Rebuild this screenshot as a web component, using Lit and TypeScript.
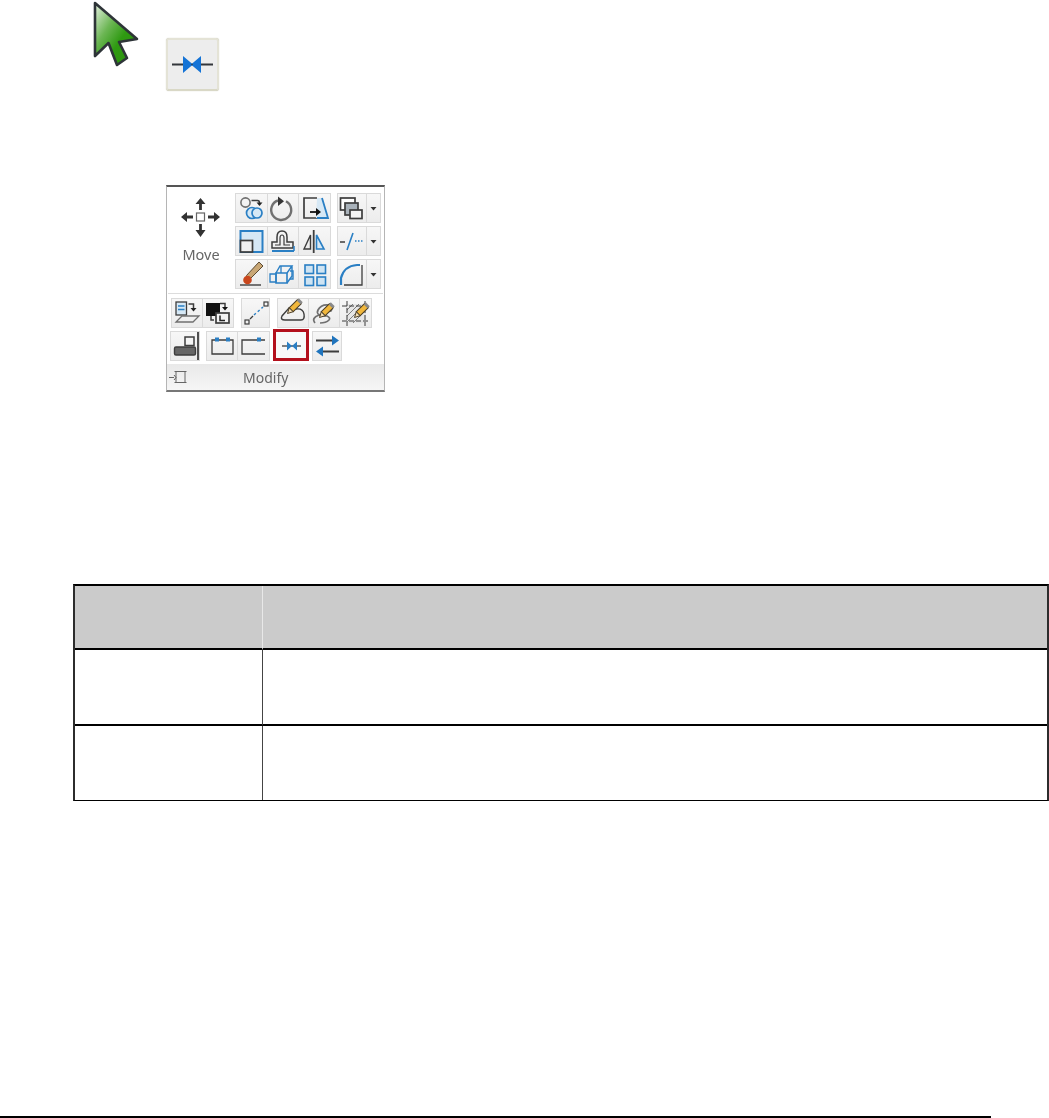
import { LitElement, html, css, svg } from "lit";
import { customElement } from "lit/decorators.js";

const B = "#2a7fc4";
const D = "#3d3d3d";
const G = "#707070";
const ic = (w: number, body: unknown) =>
  html`<svg width=${w} height="30" viewBox="0 0 ${w} 30" fill="none" stroke-width="1.4">${body}</svg>`;

const pencil = (x: number, y: number) => svg`<g transform="translate(${x} ${y}) rotate(45) scale(1.15)">
  <rect x="-2.4" y="-9" width="4.8" height="10" fill="#f1b73c" stroke="#4a3d25" stroke-width=".9"/>
  <rect x="-2.4" y="-10.8" width="4.8" height="2.6" fill="#8a8a8a"/>
  <path d="M-2.4 1 0 5.500 2.400 1z" fill="#f3dcb0" stroke="#4a3d25" stroke-width=".8"/></g>`;

const icons: Record<string, unknown> = {
  copy: svg`<circle cx="10.500" cy="9.500" r="4.600" stroke=${G} stroke-width="1.6"/><circle cx="17" cy="20" r="5.500" fill="#d6e8f5" stroke=${B} stroke-width="1.700"/><circle cx="22" cy="20" r="5" fill="#d6e8f5" stroke=${B} stroke-width="1.700"/><path d="M16.500 7.500h6q2 0 2 2.500" stroke=${D} stroke-width="1.500"/><path d="M21.500 9.500h6l-3 3.500z" fill="#222"/>`,
  rotate: svg`<path d="M11 7.500a10 10 0 1 0 8 .7" stroke=${G} stroke-width="2.400"/><path d="M11 3.500v9.500l6-4.800z" fill="#333"/>`,
  stretch: svg`<path d="M19 25H6V5h13" stroke=${D} stroke-width="1.700"/><path d="M19 5h5l6 20H18z" fill="#d6e8f5"/><path d="M24 5l6 20H19" stroke=${B} stroke-width="1.800"/><path d="M12 19h7" stroke="#111" stroke-width="1.800"/><path d="M18 15l5 4-5 4z" fill="#111"/>`,
  layers: svg`<rect x="3.500" y="5" width="14.500" height="12" fill="#fff" stroke=${D} stroke-width="1.700"/><rect x="8" y="10" width="13" height="12" fill="#a9b2ba" stroke=${D} stroke-width="1.700"/><rect x="13" y="17" width="12" height="8.500" fill="#f4f4f4" stroke=${D} stroke-width="1.700"/>`,
  scale: svg`<rect x="5.500" y="5" width="22" height="21" fill="#d6e8f5" stroke=${B} stroke-width="2"/><rect x="5.500" y="14.500" width="12" height="11.500" fill="#f0f0f0" stroke=${D} stroke-width="1.700"/>`,
  offset: svg`<path d="M5 22v-6h5V11q0-6 5-6t5 6v5h6v6z" stroke=${D} stroke-width="1.500"/><path d="M8 19h5v-7q0-3 2-3t2 3v7h6" stroke=${D} stroke-width="1.200"/><path d="M5 25h22" stroke=${B} stroke-width="2"/><path d="M27 25v-5" stroke=${B} stroke-width="1.500"/>`,
  mirror: svg`<path d="M15.700 4v23" stroke=${D} stroke-width="1.800"/><path d="M12.500 9v14H6z" stroke=${D} stroke-width="1.400" fill="#eee"/><path d="M18.500 9v14H26z" stroke=${B} stroke-width="1.600" fill="#d6e8f5"/>`,
  trim: svg`<path d="M3 16h5" stroke=${D} stroke-width="1.500"/><path d="M18 15h1.500M21 15h1.500M24 15h1.500" stroke=${B} stroke-width="1.500"/><path d="M10 24L16 7" stroke=${B} stroke-width="1.600"/>`,
  fillet: svg`<path d="M4 26V19Q7 7 20 6h3" stroke=${B} stroke-width="2.200"/><path d="M25 6v20H7" stroke=${D} stroke-width="1.300"/>`,
  brush: svg`<path d="M5 26h21" stroke=${D} stroke-width="1.400"/><path d="M11.500 16.500L24 3l4 4-13 13z" fill="#c9a775" stroke="#5b4a32" stroke-width="1"/><circle cx="12.500" cy="21" r="4.300" fill="#c9471d"/>`,
  box3d: svg`<path d="M9 14h11v10H9z" stroke=${B} stroke-width="1.600"/><path d="M9 14l4-7h12l-5 7M25 7v10l-5 7" stroke=${B} stroke-width="1.400"/><path d="M3 15h6v8H3zM14 7v7" stroke=${B} stroke-width="1.300"/><path d="M23 12h3v8h-3" stroke=${B}/>`,
  array: svg`<g fill="#cfe4f3" stroke=${B} stroke-width="1.600"><rect x="7" y="6" width="8.500" height="8.500"/><rect x="19" y="6" width="8.500" height="8.500"/><rect x="7" y="18" width="8.500" height="8.500"/><rect x="19" y="18" width="8.500" height="8.500"/></g>`,
  editp: svg`<rect x="5" y="4" width="10.500" height="13" fill="#d6e8f5" stroke=${D} stroke-width="1.300"/><path d="M7 8h6.500M7 11.500h6.500" stroke=${B} stroke-width="1.500"/><path d="M17.500 6h5v4" stroke=${D} stroke-width="1.500"/><path d="M19.500 10h6l-3 3.500z" fill="#222"/><path d="M11 18h17l-6 6H5z" stroke=${G} stroke-width="1.300"/>`,
  editb: svg`<rect x="4" y="5" width="14" height="13" fill="#111"/><rect x="14" y="15" width="13" height="10" fill="#f2f2f2" stroke=${D} stroke-width="1.700"/><path d="M18 17.500v5h5" stroke="#222" stroke-width="1.500"/><path d="M18 5.500h5v4" stroke=${D} stroke-width="1.500"/><path d="M20 9h6l-3 3.500z" fill="#111"/><path d="M9 18v4h3" stroke=${D} stroke-width="1.500"/>`,
  dots: svg`<rect x="4" y="22" width="4" height="4" stroke=${D} stroke-width="1.200"/><rect x="23" y="4" width="4" height="4" stroke=${D} stroke-width="1.200"/><path d="M9 21l3-3" stroke=${D} stroke-width="1.200"/><path d="M13 17l9-8" stroke=${B} stroke-width="1.400" stroke-dasharray="2.500 2.500"/>`,
  cloud: svg`<path d="M8 22q-5 0-3-4l7-8q4-2 7 1 7-1 8 5t-3 6z" stroke=${D} stroke-width="1.400"/>${pencil(15, 11)}`,
  spline: svg`<path d="M7 25q-4-5 4-8t12-4q3-4-2-6-8-1-11 5t9 6q4 2 2 4-3 3-9 3" stroke=${G} stroke-width="1.700"/>${pencil(16, 15)}`,
  hatch: svg`<rect x="7" y="6" width="20" height="19" fill="#e6e6e6"/><path d="M8 12l6-6M8 18l12-12M8 24l18-18M14 25l12-12" stroke=${G} stroke-width=".9"/><path d="M3 8h26M3 23h26M8 3v25M26 3v25" stroke=${D} stroke-width="1" stroke-dasharray="5 2"/>${pencil(20, 15)}`,
  align: svg`<rect x="15" y="6" width="9" height="8.500" fill="#f4f4f4" stroke=${D} stroke-width="1.500"/><rect x="4.500" y="16" width="21" height="8" rx="1.500" fill="#666" stroke=${D}/><path d="M28 1v28" stroke=${D} stroke-width="1.800"/>`,
  box1: svg`<path d="M6 9v14h21V9z" stroke=${D} stroke-width="1.300"/><rect x="9" y="6.500" width="4" height="4" fill=${B}/><rect x="20" y="6.500" width="4" height="4" fill=${B}/>`,
  box2: svg`<path d="M28 23H5V9h23" stroke=${D} stroke-width="1.300"/><rect x="20" y="6.500" width="4" height="4" fill=${B}/>`,
  join: svg`<path d="M8 15h19" stroke=${D} stroke-width="1.300"/><path d="M13 10.500v9l5-4.500zM23 10.500v9l-5-4.500z" fill=${B}/>`,
  swap: svg`<path d="M4 9.500h18M8 20.500h19" stroke=${D} stroke-width="1.800"/><path d="M20 4.500v10l7-5zM11 15.500v10l-7-5z" fill="#1f74bd"/>`,
};

const drop = svg`<path d="M4.500 14h6l-3 3.500z" fill="#333"/>`;

type Cell = { i?: string; w: number; red?: boolean };
type Group = Cell[];

@customElement("app-root")
export class AppRoot extends LitElement {
  static styles = css`
    :host {
      display: flex;
      flex-direction: column;
      height: 1118px;
      background: #fff;
      font-family: "Noto Sans", sans-serif;
      overflow: hidden;
    }
    .top { display: flex; height: 91px; padding-left: 92px; }
    .cursor { display: block; width: 48px; height: 68px; margin-right: 26px; }
    .callout {
      box-sizing: border-box;
      width: 53px; height: 53px; margin-top: 38px;
      background: #ededed;
      border: 2px solid #e4e3d6;
      border-bottom-color: #d9d8c6;
      border-radius: 3px;
      box-shadow: 0 0 1px #bdbcaa;
      filter: blur(.4px);
    }
    .callout svg { display: block; }
    .panel {
      box-sizing: border-box;
      width: 219px; height: 207px;
      margin: 94px 0 0 166px;
      border: 1px solid #b5b5b5;
      border-top: 2px solid #555;
      border-bottom: 2px solid #777;
      display: flex; flex-direction: column;
      filter: blur(.45px);
      background: #fff;
    }
    .upper { display: flex; padding-top: 6px; }
    .move {
      width: 68px;
      display: flex; flex-direction: column; align-items: center;
      padding-top: 2px;
      color: #666; font-size: 14.500px; line-height: 16px;
    }
    .move svg { display: block; margin-bottom: 5px; }
    .rows { display: flex; flex-direction: column; gap: 3px; }
    .row { display: flex; height: 30px; }
    .gap6 { gap: 6px; }
    .gap7 { gap: 7px; margin-left: 1px; }
    .gap4 { gap: 4px; }
    .after { margin-right: 2px; }
    .g { display: flex; height: 30px; }
    .c {
      box-sizing: border-box;
      height: 30px;
      background: linear-gradient(#f7f7f7, #ececec);
      border: 1px solid #dadada;
      margin-left: -1px;
    }
    .g .c:first-child { margin-left: 0; }
    .c svg { display: block; margin: -1px; }
    .sep { height: 1px; background: #dcdcdc; margin: 4px 1px 4px; }
    .lower { display: flex; flex-direction: column; gap: 3px; padding-left: 3px; }
    .red { position: relative; background: #f8f8f8; }
    .red::after {
      content: ""; position: absolute; inset: -3px -2px -1px;
      border: 3px solid #b3101c;
    }
    .footer {
      margin-top: 3px; flex: 1;
      display: flex; align-items: center;
      background: linear-gradient(#e9e9e9, #f6f6f6);
      color: #666; font-size: 14px;
      padding-left: 1px;
    }
    .footer svg { display: block; }
    .footer span { margin-left: 53px; }
    .table {
      box-sizing: border-box;
      margin: 192px 0 0 73px;
      width: 976px;
      border: 2px solid #2c2c2c;
      border-top-color: #000;
      border-bottom: 1px solid #000;
      display: grid;
      grid-template-columns: 188px 1fr;
      grid-template-rows: 64px 76px 74px;
    }
    .table > div { box-sizing: border-box; }
    .th { background: #cbcbcb; border-bottom: 2px solid #000; }
    .td { border-bottom: 2px solid #000; }
    .table > div:nth-last-child(-n+2) { border-bottom: 0; }
    .first { border-right: 1px solid #444; }
    .th.first { border-right-color: #e8e8e8; }
    .rule {
      margin-top: auto;
      width: 991px; height: 2px; background: #000;
    }
  `;

  private cell(c: Cell) {
    return html`<div class="c ${c.red ? "red" : ""}" style="width:${c.w}px">
      ${ic(c.w, c.i === "drop" ? drop : c.i ? icons[c.i] : null)}
    </div>`;
  }

  private group(g: Group, cls = "") {
    return html`<div class="g ${cls}">${g.map((c) => this.cell(c))}</div>`;
  }

  private row(groups: Group[], cls: string, firstCls = "") {
    return html`<div class="row ${cls}">
      ${groups.map((g, i) => this.group(g, i === 0 ? firstCls : ""))}
    </div>`;
  }

  render() {
    return html`
      <div class="top">
        <svg class="cursor" viewBox="0 0 48 68">
          <defs>
            <linearGradient id="cg" x1="0" y1="0" x2="1" y2="1">
              <stop offset="0" stop-color="#e8f2e4" />
              <stop offset=".35" stop-color="#6cb654" />
              <stop offset=".6" stop-color="#2f9a12" />
              <stop offset="1" stop-color="#2b900c" />
            </linearGradient>
          </defs>
          <path d="M3 3 45 39 27 42 35 58 25 65 16.500 43 3 56Z" fill="url(#cg)" stroke="#2e3438" stroke-width="2.600" stroke-linejoin="round" />
        </svg>
        <div class="callout">
          <svg width="49" height="49" viewBox="0 0 49 49">
            <path d="M4 24.500h41" stroke="#33363b" stroke-width="2.200" />
            <path d="M15 16v17l10-8.500zM33 16v17l-10-8.500z" fill="#1473d6" />
          </svg>
        </div>
      </div>

      <div class="panel">
        <div class="upper">
          <div class="move">
            <svg width="44" height="46" viewBox="0 0 44 46">
              <rect x="17.500" y="18" width="8" height="8" fill="#fff" stroke="#666" stroke-width="1.200" />
              <path d="M21.500 15V8M21.500 29v7M14 22H7M29 22h7" stroke="#333" stroke-width="2.800" />
              <path d="M16.500 9l5-6 5 6zM16.500 35l5 7 5-7zM8 17l-6 5 6 5zM35 17l6 5-6 5z" fill="#333" />
            </svg>
            <span>Move</span>
          </div>
          <div class="rows">
            ${this.row([
              [{ i: "copy", w: 33 }, { i: "rotate", w: 32 }, { i: "stretch", w: 33 }],
              [{ i: "layers", w: 30 }, { i: "drop", w: 15 }],
            ], "gap6")}
            ${this.row([
              [{ i: "scale", w: 33 }, { i: "offset", w: 32 }, { i: "mirror", w: 33 }],
              [{ i: "trim", w: 30 }, { i: "drop", w: 15 }],
            ], "gap6")}
            ${this.row([
              [{ i: "brush", w: 33 }, { i: "box3d", w: 32 }, { i: "array", w: 33 }],
              [{ i: "fillet", w: 30 }, { i: "drop", w: 15 }],
            ], "gap6")}
          </div>
        </div>
        <div class="sep"></div>
        <div class="lower">
          ${this.row([
            [{ i: "editp", w: 32 }, { i: "editb", w: 32 }],
            [{ i: "dots", w: 29 }],
            [{ i: "cloud", w: 32 }, { i: "spline", w: 32 }, { i: "hatch", w: 33 }],
          ], "gap7")}
          ${this.row([
            [{ i: "align", w: 30 }],
            [{ i: "box1", w: 32 }, { i: "box2", w: 33 }],
            [{ i: "join", w: 34, red: true }],
            [{ i: "swap", w: 30 }],
          ], "gap4", "after")}
        </div>
        <div class="footer">
          <svg width="22" height="20" viewBox="0 0 22 20" fill="none" stroke="#666" stroke-width="1">
            <path d="M1 10.500h5M6.500 4.500h12M8 4.500v11M17 4.500v11M6.500 15.500h12M6 8l2 2.500L6 13" />
          </svg>
          <span>Modify</span>
        </div>
      </div>

      <div class="table">
        <div class="th first"></div>
        <div class="th"></div>
        <div class="td first"></div>
        <div class="td"></div>
        <div class="td first"></div>
        <div class="td"></div>
      </div>

      <div class="rule"></div>
    `;
  }
}
